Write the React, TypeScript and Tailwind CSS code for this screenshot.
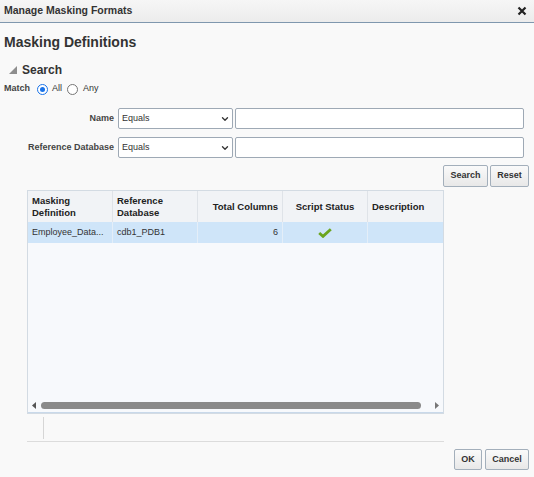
import { ChevronDown } from "lucide-react"

const font = "font-['Liberation_Sans',Arial,sans-serif]"

function Radio({ checked }: { checked?: boolean }) {
  return (
    <span
      className={`flex h-[11px] w-[11px] items-center justify-center rounded-full bg-white ${
        checked ? "border-[1.5px] border-[#1a73e8]" : "border border-[#767676]"
      }`}
    >
      {checked && <span className="h-[5px] w-[5px] rounded-full bg-[#1a73e8]" />}
    </span>
  )
}

function Select() {
  return (
    <div className="flex h-[21px] w-[115px] items-center justify-between rounded-[2px] border border-[#9ea9b5] bg-white pl-[3px] pr-[2px] text-[9px] text-[#333]">
      <span>Equals</span>
      <ChevronDown size={10} strokeWidth={3.2} className="text-[#333]" />
    </div>
  )
}

function Button({ label, w }: { label: string; w: string }) {
  return (
    <button
      className={`${w} h-full rounded-[2px] border border-[#a3afbb] bg-gradient-to-b from-[#fafafa] to-[#e8e8e8] text-[9px] font-bold text-[#333]`}
    >
      {label}
    </button>
  )
}

export default function App() {
  return (
    <div className={`flex h-[477px] w-[534px] flex-col bg-[#f9f9f9] text-[#333] ${font}`}>
      {/* Title bar */}
      <div className="flex h-[23px] shrink-0 items-center justify-between border-b border-[#7f97ae] bg-gradient-to-b from-[#f6f6f6] to-[#ececec] pl-[4px] pr-[7px]">
        <span className="text-[10.5px] font-bold text-[#333]">Manage Masking Formats</span>
        <svg width="10" height="10" viewBox="0 0 10 10">
          <path d="M1.5 1.5 L8.5 8.5 M8.5 1.5 L1.5 8.5" stroke="#222" strokeWidth="2.2" />
        </svg>
      </div>

      <div className="flex flex-col px-[4px]">
        <h1 className="mt-[11px] text-[14px] font-bold leading-[17px]">Masking Definitions</h1>

        {/* Search header */}
        <div className="mt-[11px] flex h-[15px] items-center">
          <svg width="8" height="8" viewBox="0 0 8 8" className="ml-[5px]">
            <polygon points="8,0 8,8 0,8" fill="#8e8e8e" />
          </svg>
          <span className="ml-[5px] text-[12px] font-bold">Search</span>
        </div>

        {/* Match */}
        <div className="mt-[5px] flex h-[14px] items-center text-[9px]">
          <span className="font-bold text-[#444]">Match</span>
          <span className="ml-[7px]"><Radio checked /></span>
          <span className="ml-[4px]">All</span>
          <span className="ml-[5px]"><Radio /></span>
          <span className="ml-[5px]">Any</span>
        </div>

        {/* Fields */}
        <div className="mt-[12px] flex h-[21px] items-center">
          <span className="w-[110px] text-right text-[9px] font-bold text-[#444]">Name</span>
          <div className="ml-[4px]"><Select /></div>
          <div className="ml-[2px] h-[21px] w-[289px] rounded-[2px] border border-[#9ea9b5] bg-white" />
        </div>
        <div className="mt-[8px] flex h-[21px] items-center">
          <span className="w-[110px] text-right text-[9px] font-bold text-[#444]">Reference Database</span>
          <div className="ml-[4px]"><Select /></div>
          <div className="ml-[2px] h-[21px] w-[289px] rounded-[2px] border border-[#9ea9b5] bg-white" />
        </div>

        <div className="mt-[7px] flex h-[22px] justify-end gap-[2px] pr-[1px]">
          <Button label="Search" w="w-[45px]" />
          <Button label="Reset" w="w-[39px]" />
        </div>

        {/* Table */}
        <div className="ml-[23px] mt-[3px] flex h-[224px] w-[417px] flex-col border border-[#d3dbe3] bg-[#f7f9fc]">
          <div className="flex h-[31px] shrink-0 bg-[#f1f3f6] text-[9.5px] font-bold leading-[12px] text-[#222]">
            <div className="flex w-[85px] items-center border-r border-[#dfe3e8] px-[4px]">Masking<br />Definition</div>
            <div className="flex w-[85px] items-center border-r border-[#dfe3e8] px-[4px]">Reference<br />Database</div>
            <div className="flex w-[85px] items-center justify-end border-r border-[#dfe3e8] px-[4px]">Total Columns</div>
            <div className="flex w-[85px] items-center justify-center border-r border-[#dfe3e8]">Script Status</div>
            <div className="flex flex-1 items-center px-[4px]">Description</div>
          </div>
          <div className="flex h-[21px] shrink-0 bg-[#cfe5f9] text-[9px] text-[#333]">
            <div className="flex w-[85px] items-center border-r border-[#e4eef8] px-[4px]">Employee_Data...</div>
            <div className="flex w-[85px] items-center border-r border-[#e4eef8] px-[4px]">cdb1_PDB1</div>
            <div className="flex w-[85px] items-center justify-end border-r border-[#e4eef8] px-[4px]">6</div>
            <div className="flex w-[85px] items-center justify-center border-r border-[#e4eef8]">
              <svg width="14" height="10" viewBox="0 0 14 10">
                <path d="M1.2 5 L5 8.4 L12.8 1.2" fill="none" stroke="#6ba51f" strokeWidth="2.8" />
              </svg>
            </div>
            <div className="flex-1" />
          </div>
          <div className="flex-1" />
          {/* Scrollbar */}
          <div className="flex h-[13px] shrink-0 items-center border-b border-[#c9d9ea] pb-[1px]">
            <svg width="4" height="7" viewBox="0 0 4 7" className="ml-[4px]">
              <polygon points="4,0 4,7 0,3.5" fill="#555" />
            </svg>
            <div className="ml-[5px] h-[7px] w-[380px] rounded-full bg-[#8a8a8a]" />
            <svg width="4" height="7" viewBox="0 0 4 7" className="ml-[14px]">
              <polygon points="0,0 4,3.5 0,7" fill="#777" />
            </svg>
          </div>
        </div>

        <div className="ml-[23px] h-[28px] w-[417px] border-b border-[#dcdcdc] pl-[16px] pt-[3px]">
          <div className="h-[22px] w-px bg-[#d6d6d6]" />
        </div>

        <div className="mt-[7px] flex h-[21px] justify-end gap-[3px] pr-[1px]">
          <Button label="OK" w="w-[28px]" />
          <Button label="Cancel" w="w-[44px]" />
        </div>
      </div>
    </div>
  )
}
